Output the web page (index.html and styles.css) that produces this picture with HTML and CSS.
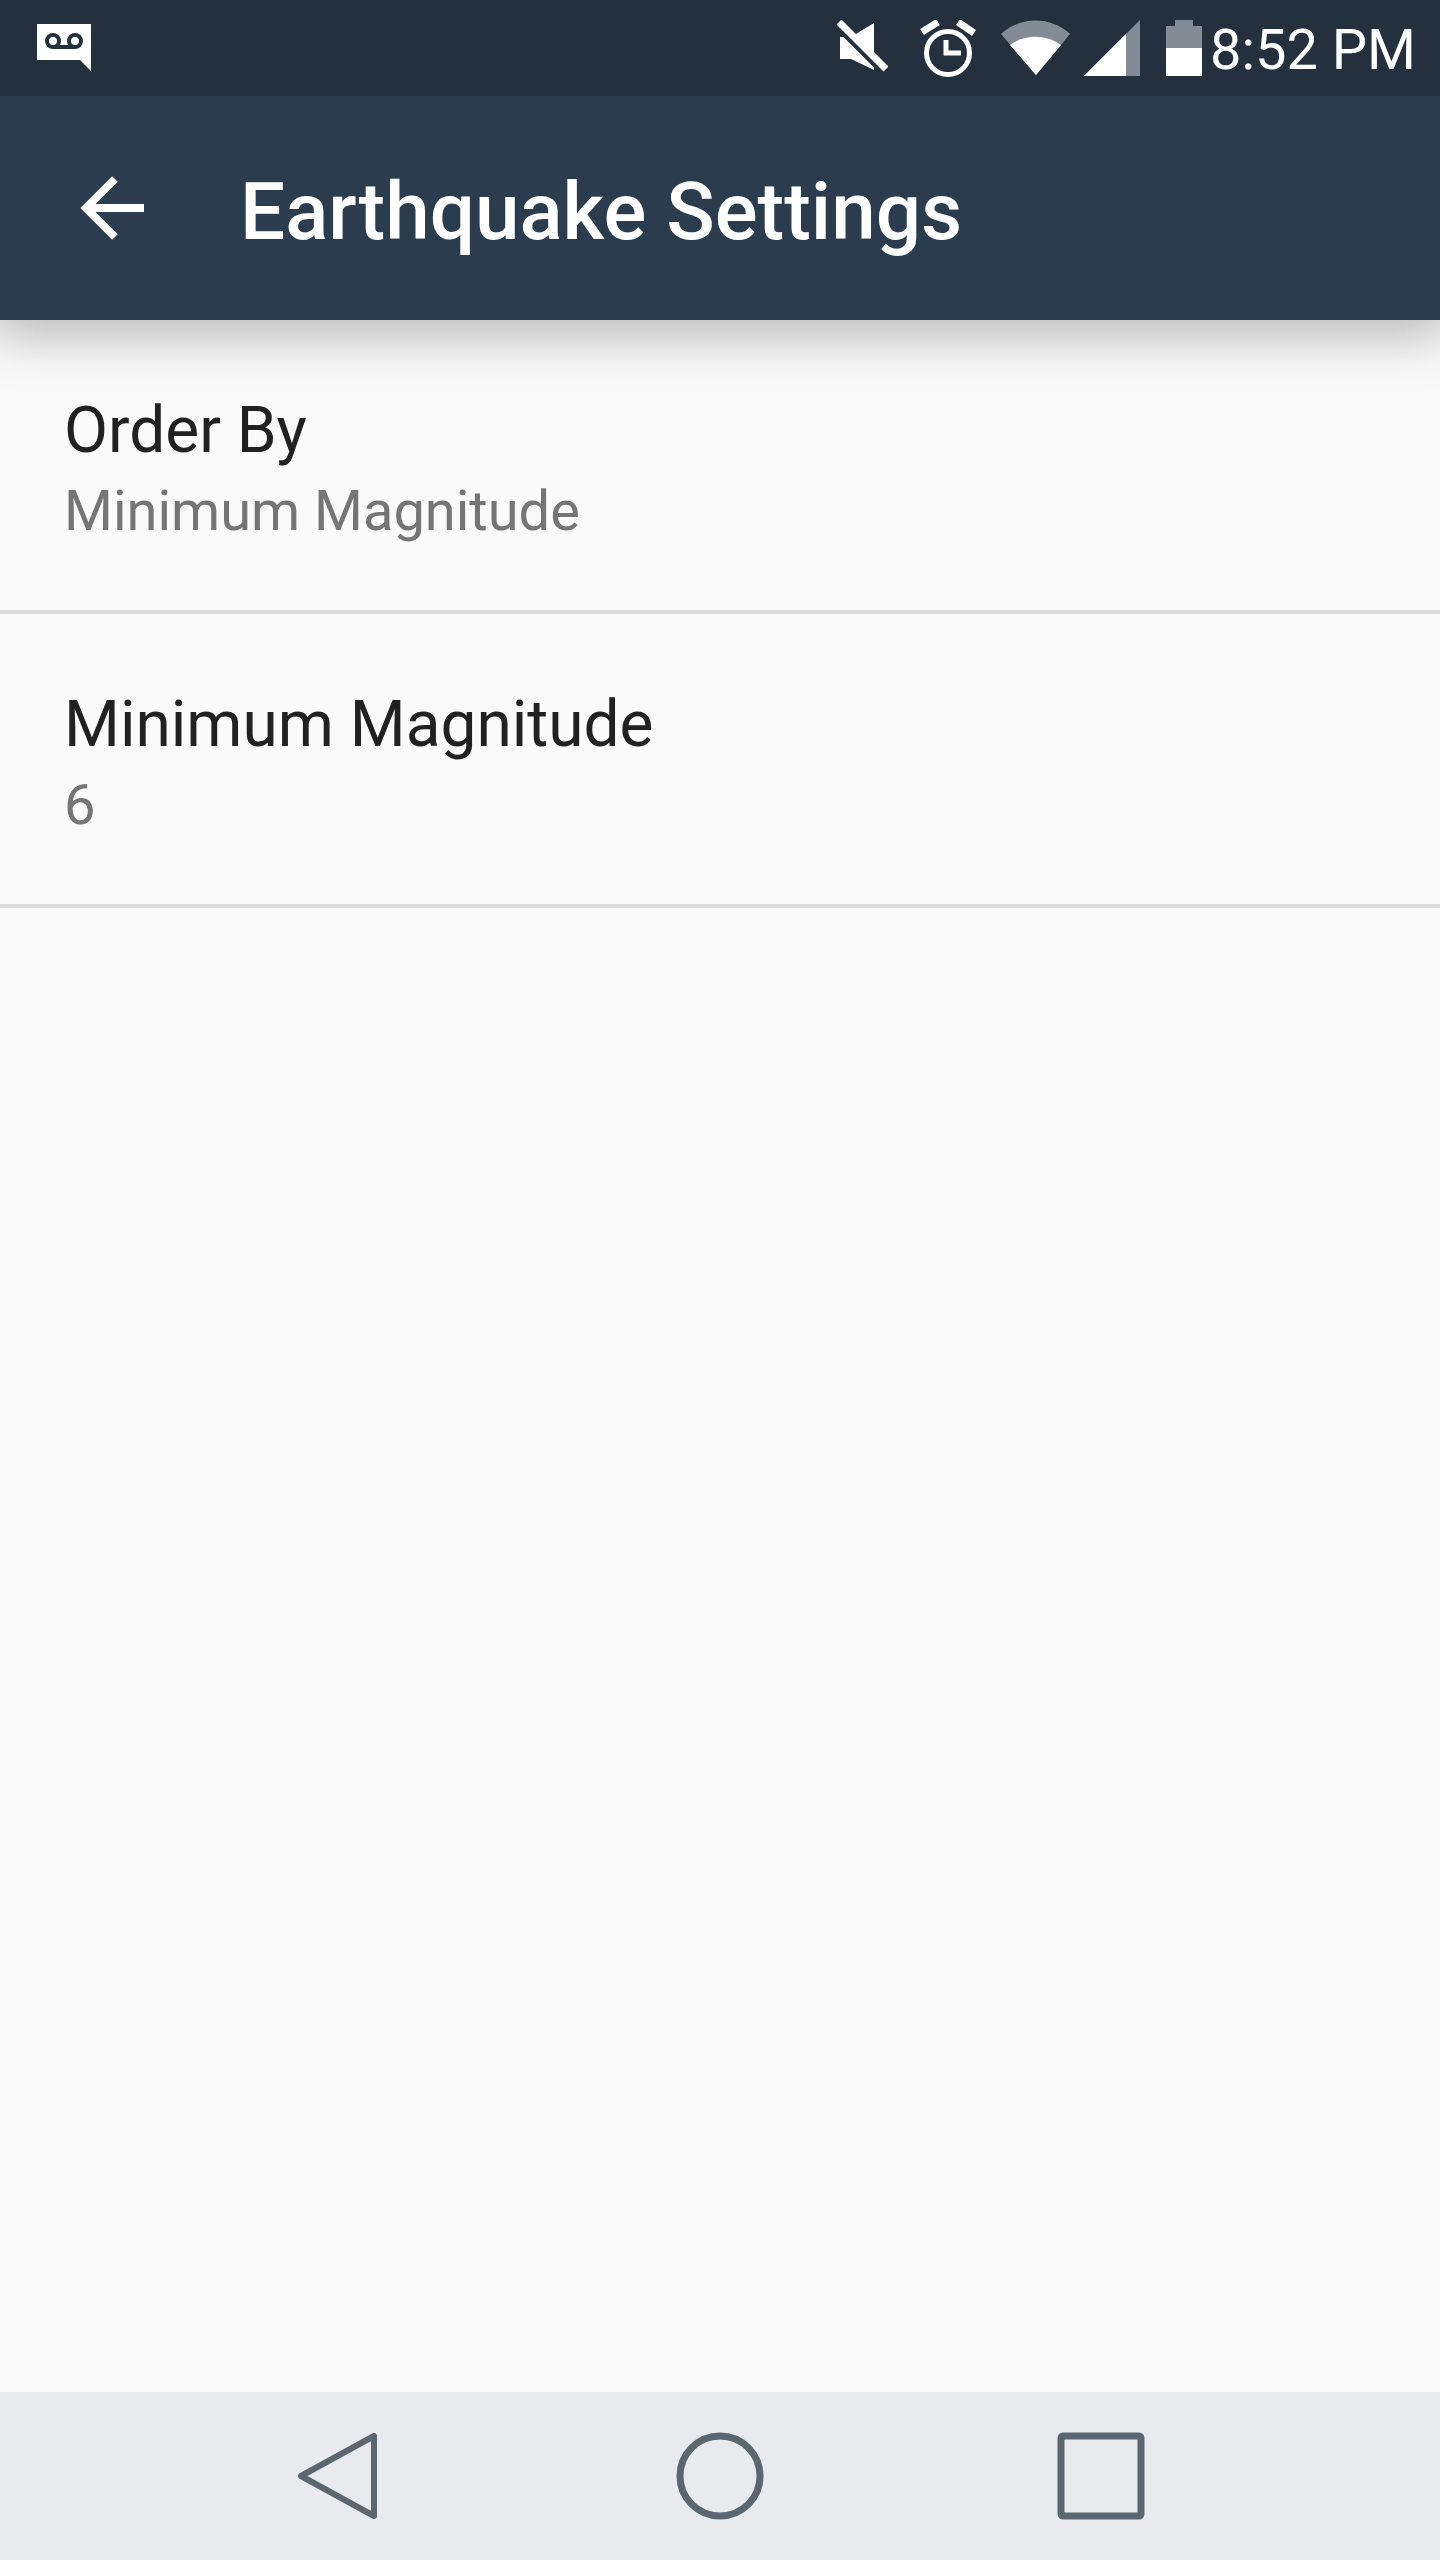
FILE: index.html
```html
<!DOCTYPE html>
<html lang="en">
<head>
    <meta charset="UTF-8" />
    <title>Earthquake Settings</title>
    <link rel="stylesheet" href="styles.css">
</head>
<body>
    <div class="status-bar">
        <svg class="voicemail" width="54" height="47" viewBox="0 0 54 47">
            <path d="M0 0H54V47L43 36H0Z" fill="#fff" />
            <circle cx="16" cy="17" r="6" fill="none" stroke="#24303d" stroke-width="4" />
            <circle cx="38" cy="17" r="6" fill="none" stroke="#24303d" stroke-width="4" />
            <path d="M16 23H38" stroke="#24303d" stroke-width="4" />
        </svg>
        <div class="status-right">
            <svg class="ic-mute" width="52" height="52" viewBox="0 0 52 52">
                <path d="M4 17H15L38 3V50L15 39H4Z" fill="#fff" />
                <path d="M0 6L46 52" stroke="#24303d" stroke-width="5" />
                <path d="M3 2L50 49" stroke="#fff" stroke-width="7" />
            </svg>
            <svg class="ic-alarm" width="56" height="57" viewBox="0 0 56 57">
                <circle cx="28" cy="33" r="21.5" fill="none" stroke="#fff" stroke-width="5" />
                <path d="M26 20V33H41" fill="none" stroke="#fff" stroke-width="5" />
                <path d="M2 12L18 2" stroke="#fff" stroke-width="7" />
                <path d="M38 2L54 13" stroke="#fff" stroke-width="7" />
            </svg>
            <svg class="ic-wifi" width="69" height="55" viewBox="0 0 69 55">
                <path d="M0 14C19 -4 50 -4 69 14L35 55Z" fill="#838b94" />
                <path d="M9 25C24 14 45 14 60 25L35 55Z" fill="#fff" />
            </svg>
            <svg class="ic-signal" width="56" height="56" viewBox="0 0 56 56">
                <path d="M0 56L56 0V56Z" fill="#838b94" />
                <path d="M0 56L42 14V56Z" fill="#fff" />
            </svg>
            <svg class="ic-battery" width="36" height="56" viewBox="0 0 36 56">
                <path d="M9 0H27V6H36V28H0V6H9Z" fill="#838b94" />
                <rect y="28" width="36" height="28" fill="#fff" />
            </svg>
            <span class="clock">8:52 PM</span>
        </div>
    </div>

    <div class="app-bar">
        <svg class="back" width="64" height="64" viewBox="0 0 64 64">
            <path d="M64 32H4" stroke="#fff" stroke-width="8" />
            <path d="M35 3L6 32L35 61" fill="none" stroke="#fff" stroke-width="8" />
        </svg>
        <h1>Earthquake Settings</h1>
    </div>

    <div class="settings">
        <div class="setting">
            <div class="setting-title">Order By</div>
            <div class="setting-summary">Minimum Magnitude</div>
        </div>
        <div class="setting">
            <div class="setting-title">Minimum Magnitude</div>
            <div class="setting-summary">6</div>
        </div>
    </div>

    <div class="nav-bar">
        <svg width="88" height="88" viewBox="0 0 88 88">
            <path d="M79 4V84L6 44Z" fill="none" stroke="#5b6770" stroke-width="6" stroke-linejoin="round" />
        </svg>
        <svg width="88" height="88" viewBox="0 0 88 88">
            <circle cx="44" cy="44" r="40" fill="none" stroke="#5b6770" stroke-width="7" />
        </svg>
        <svg width="88" height="88" viewBox="0 0 88 88">
            <rect x="4" y="4" width="80" height="80" rx="2" fill="none" stroke="#5b6770" stroke-width="7" />
        </svg>
    </div>
</body>
</html>
```

FILE: styles.css
```css
body {
    margin: 0;
    height: 2560px;
    display: flex;
    flex-direction: column;
    font-family: Roboto, sans-serif;
    background: #fafafa;
}

.status-bar {
    height: 96px;
    background: #24303d;
    display: flex;
    justify-content: space-between;
    padding: 0 24px 0 37px;
    color: white;
    position: relative;
    z-index: 1;
}

.voicemail {
    margin-top: 24px;
}

.status-right {
    display: flex;
    align-items: flex-start;
    padding-top: 20px;
}

.ic-mute {
    margin-right: 32px;
}

.ic-alarm {
    margin-right: 25px;
}

.ic-wifi {
    margin-right: 14px;
}

.ic-signal {
    margin-right: 26px;
}

.ic-battery {
    margin-right: 8px;
}

.clock {
    font-size: 56px;
    line-height: 60px;
}

.app-bar {
    height: 224px;
    background: #2b3c4e;
    box-shadow: 0 5px 50px 10px rgba(0,0,0,0.27);
    display: flex;
    align-items: center;
    padding-left: 80px;
    position: relative;
}

.app-bar h1 {
    margin: 8px 0 0 96px;
    color: white;
    font-size: 80px;
    font-weight: 500;
}

.settings {
    flex: 1;
}

.setting {
    height: 294px;
    box-sizing: border-box;
    border-bottom: 4px solid #dcdcdc;
    padding: 70px 64px 0;
}

.setting-title {
    font-size: 64px;
    line-height: 82px;
    color: #212121;
}

.setting-summary {
    font-size: 56px;
    line-height: 78px;
    color: #757575;
}

.nav-bar {
    height: 168px;
    background: #e9eaee;
    display: flex;
    align-items: center;
    justify-content: center;
    gap: 293px;
}
```
